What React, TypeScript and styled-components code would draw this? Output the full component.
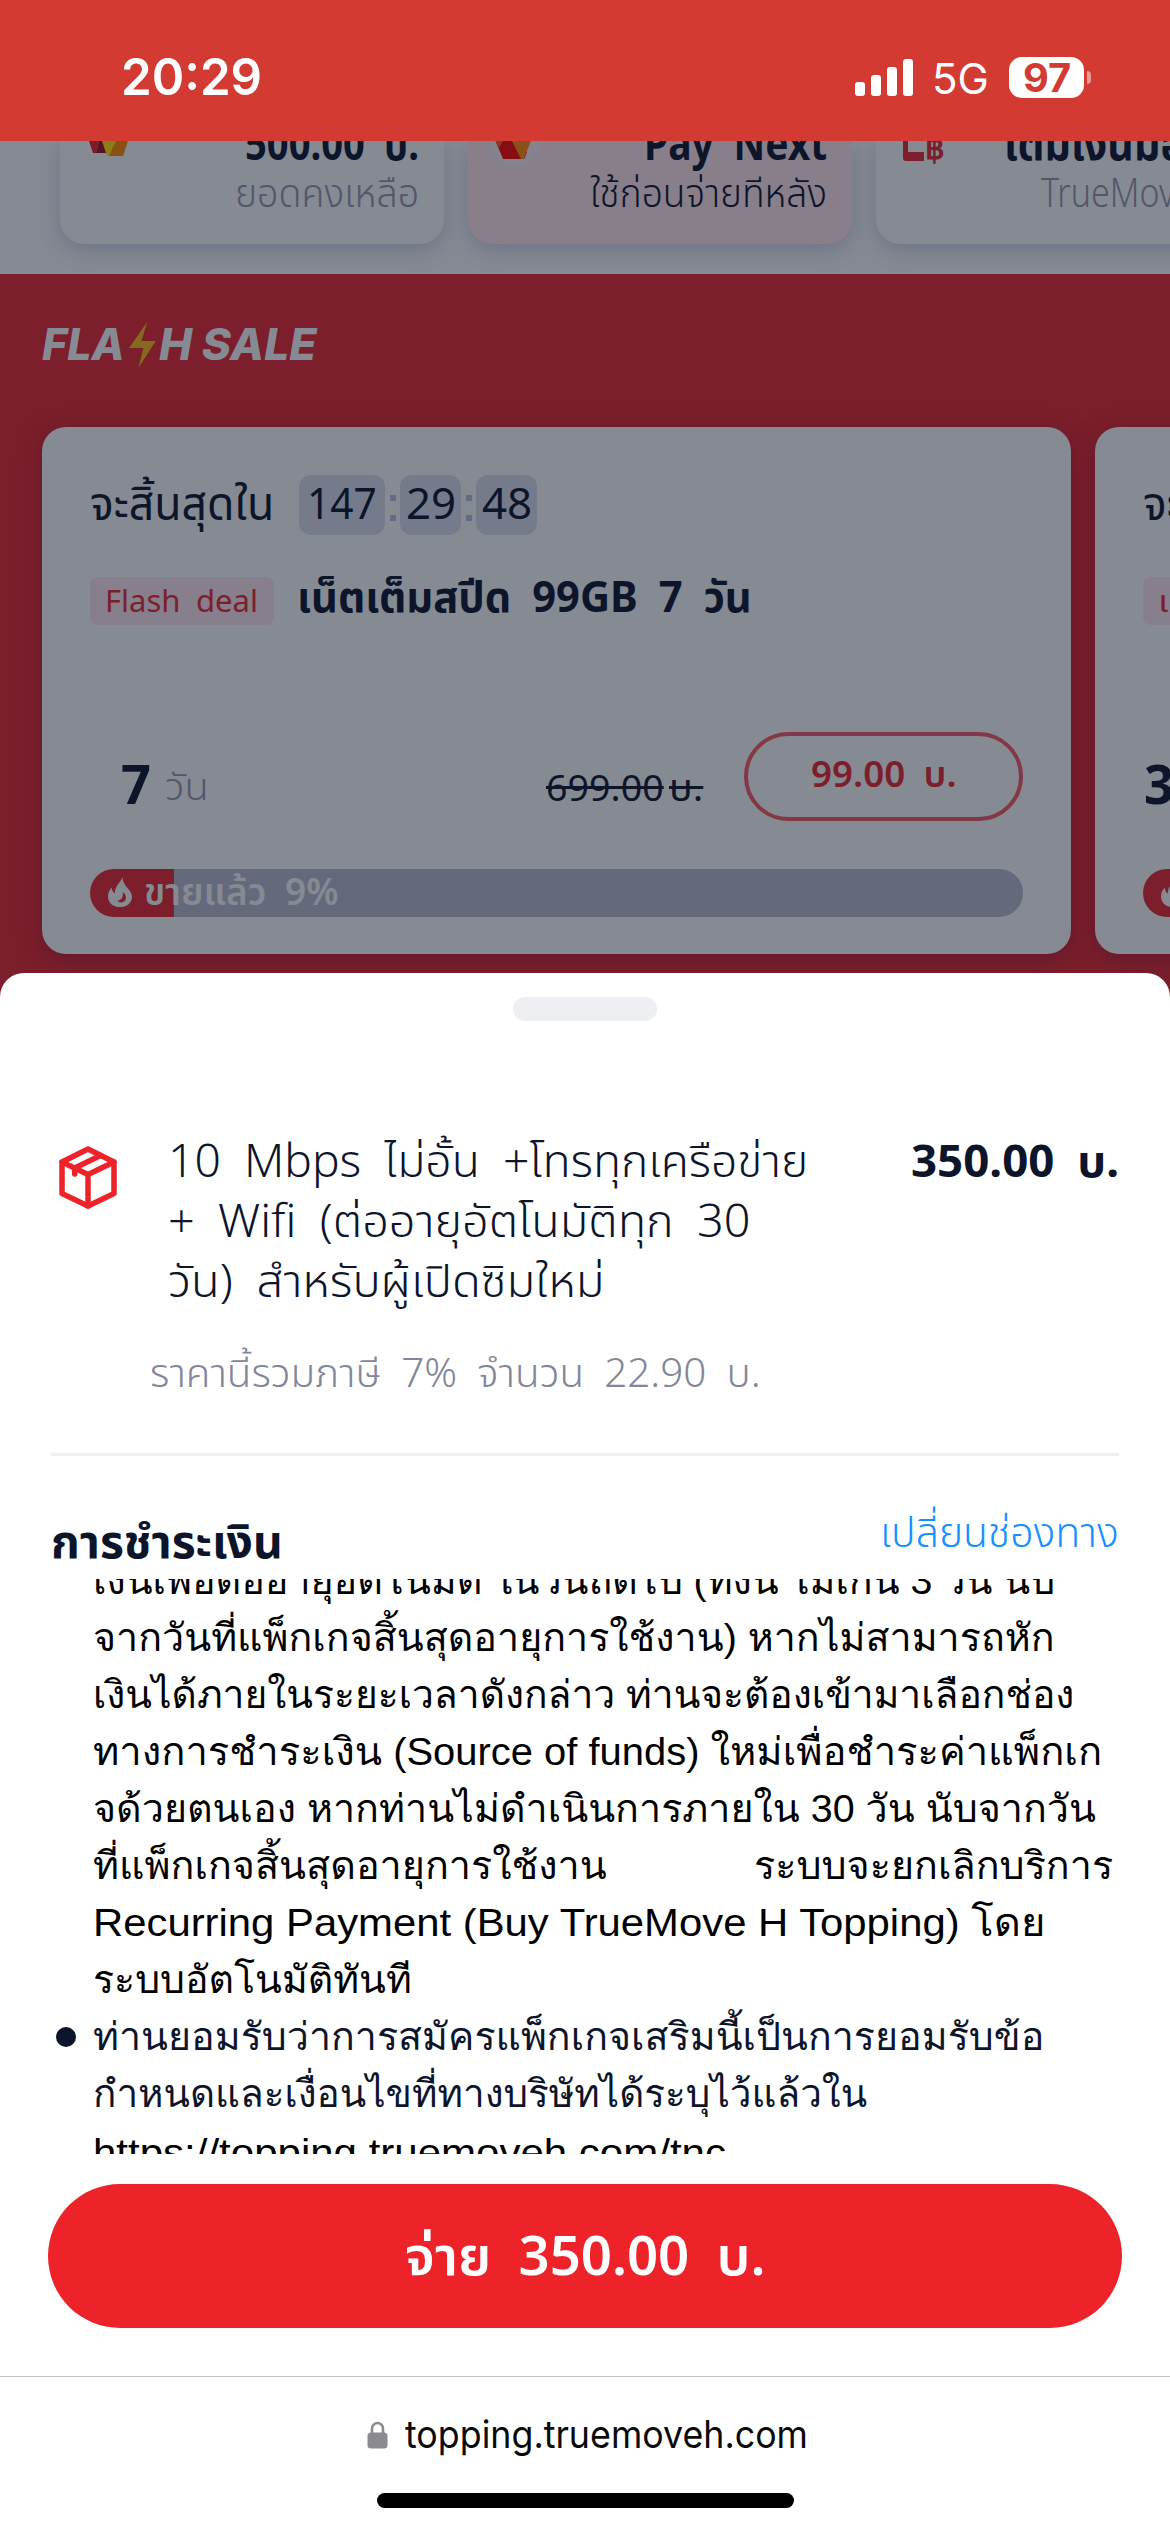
import React, { useLayoutEffect, useRef, useState } from "react";
import styled, { createGlobalStyle, css } from "styled-components";

const GlobalStyle = createGlobalStyle`
  * { box-sizing: border-box; }
  html, body { margin: 0; padding: 0; background: #fff; }
`;

const color = {
  status: "#d33a32",
  dimWhite: "#868a93",
  dimRed: "#7c1e2b",
  dimInk: "#0d152b",
  dimMuted: "#53566a",
  ink: "#0d152b",
  red: "#ee2329",
};

type Face = "brand" | "text" | "system";

const faces: Record<Face, { stack: string; shift: number; gap: string }> = {
  brand: { stack: '"Noto Sans", "Noto Sans Thai", sans-serif', shift: 0.388, gap: "0.24em" },
  text: { stack: '"Liberation Sans", Loma, "Noto Sans", sans-serif', shift: 0.3465, gap: "0" },
  system: { stack: 'Inter, "Noto Sans", sans-serif', shift: 0.364, gap: "0" },
};

/* ---------- text that keeps a set measure ---------- */

interface LineBoxProps {
  $face: Face;
  $size: number;
  $base: number;
  $height: number;
  $weight: number;
  $color: string;
  $width?: number;
  $strike?: boolean;
  $italic?: boolean;
}

const LineBox = styled.span<LineBoxProps>`
  display: block;
  flex: none;
  width: ${(p) => (p.$width ? `${p.$width}px` : "auto")};
  height: ${(p) => p.$height}px;
  line-height: ${(p) => 2 * (p.$base - faces[p.$face].shift * p.$size)}px;
  font-family: ${(p) => faces[p.$face].stack};
  font-size: ${(p) => p.$size}px;
  font-weight: ${(p) => p.$weight};
  font-style: ${(p) => (p.$italic ? "italic" : "normal")};
  word-spacing: ${(p) => faces[p.$face].gap};
  color: ${(p) => p.$color};
  white-space: nowrap;
  ${(p) =>
    p.$strike &&
    css`
      & > span {
        text-decoration: line-through;
        text-decoration-thickness: 3px;
      }
    `}
`;

const Measured = styled.span`
  display: inline-block;
  vertical-align: top;
  transform-origin: 0 50%;
`;

interface LineProps {
  children: string;
  size: number;
  base: number;
  height: number;
  width?: number;
  face?: Face;
  weight?: number;
  tint?: string;
  strike?: boolean;
  italic?: boolean;
}

function Line({
  children,
  size,
  base,
  height,
  width,
  face = "brand",
  weight = 400,
  tint = color.ink,
  strike,
  italic,
}: LineProps) {
  const ref = useRef<HTMLSpanElement>(null);
  const [scale, setScale] = useState(1);
  useLayoutEffect(() => {
    if (ref.current && width) setScale(width / ref.current.offsetWidth);
  }, [width, children]);
  return (
    <LineBox
      $face={face}
      $size={size}
      $base={base}
      $height={height}
      $weight={weight}
      $color={tint}
      $width={width}
      $strike={strike}
      $italic={italic}
    >
      <Measured ref={ref} style={{ transform: `scaleX(${scale})` }}>
        {children}
      </Measured>
    </LineBox>
  );
}

/* ---------- page ---------- */

const Screen = styled.main`
  width: 1170px;
  height: 2532px;
  overflow: hidden;
  display: flex;
  flex-direction: column;
  background: #fff;
`;

const StatusBar = styled.header`
  flex: none;
  height: 141px;
  display: flex;
  justify-content: space-between;
  padding: 0 79px 0 121px;
  background: ${color.status};
`;

const StatusRight = styled.div`
  display: flex;
  align-items: flex-start;
`;

const Signal = styled.div`
  display: flex;
  align-items: flex-end;
  gap: 6px;
  height: 37px;
  margin: 59px 19px 0 0;
`;

const SignalBar = styled.i<{ $h: number }>`
  width: 10px;
  height: ${(p) => p.$h}px;
  border-radius: 3px;
  background: #fff;
`;

const Battery = styled.div`
  display: flex;
  justify-content: center;
  width: 75px;
  height: 41px;
  margin: 57px 3px 0 20px;
  border-radius: 13px;
  background: #fff;
`;

const BatteryTip = styled.i`
  width: 4px;
  height: 13px;
  margin-top: 71px;
  border-radius: 0 5px 5px 0;
  background: #e79a96;
`;

/* ---------- wallet cards ---------- */

const Wallets = styled.section`
  flex: none;
  height: 133px;
  display: flex;
  gap: 24px;
  padding-left: 60px;
  overflow: hidden;
  background: ${color.dimWhite};
`;

const WalletCard = styled.article<{ $pink?: boolean }>`
  flex: none;
  display: flex;
  justify-content: space-between;
  width: 384px;
  height: 103px;
  padding: 0 25px 0 24px;
  border-radius: 0 0 24px 24px;
  background: ${(p) => (p.$pink ? "#887f8b" : color.dimWhite)};
  box-shadow: 0 6px 20px rgba(82, 88, 118, 0.45);
`;

const WalletText = styled.div`
  display: flex;
  flex-direction: column;
  align-items: flex-end;
  height: 103px;
`;

/* ---------- flash sale ---------- */

const FlashSection = styled.section`
  flex: none;
  height: 723px;
  overflow: hidden;
  background: ${color.dimRed};
`;

const FlashTitle = styled.h2`
  display: flex;
  height: 153px;
  margin: 0;
  padding-left: 42px;
`;

const Bolt = styled.svg`
  flex: none;
  width: 28px;
  height: 46px;
  margin: 48px 3px 0 3px;
`;

const Deals = styled.div`
  display: flex;
  gap: 24px;
  padding-left: 42px;
`;

const DealCard = styled.article`
  flex: none;
  width: 1029px;
  height: 527px;
  padding: 48px 48px 0;
  border-radius: 24px;
  background: ${color.dimWhite};
  box-shadow: 0 6px 22px rgba(90, 25, 45, 0.75);
`;

const TimerRow = styled.div`
  display: flex;
  height: 60px;
`;

const TimerGap = styled.i`
  width: 25px;
`;

const TimerBox = styled.div<{ $w: number }>`
  display: flex;
  justify-content: center;
  width: ${(p) => p.$w}px;
  height: 60px;
  border-radius: 12px;
  background: #767b8c;
`;

const Colon = styled.div`
  display: flex;
  flex-direction: column;
  align-items: center;
  gap: 14px;
  width: 15px;
  padding-top: 20px;
`;

const ColonDot = styled.i`
  width: 6px;
  height: 6px;
  background: #656b80;
`;

const NameRow = styled.div`
  display: flex;
  gap: 23px;
  height: 48px;
  margin-top: 42px;
`;

const Badge = styled.div`
  display: flex;
  flex: none;
  height: 48px;
  padding: 0 16px 0 15px;
  border-radius: 8px;
  background: #877f8c;
`;

const PriceRow = styled.div`
  display: flex;
  height: 89px;
  margin-top: 107px;
`;

const DayCount = styled.div`
  display: flex;
  flex: none;
  justify-content: flex-end;
  width: 61px;
  margin-right: 14px;
`;

const OldPrice = styled.div`
  display: flex;
  gap: 5px;
  margin: 0 41px 0 auto;
`;

const BuyButton = styled.div`
  display: flex;
  justify-content: center;
  width: 279px;
  height: 89px;
  border: 4px solid #833845;
  border-radius: 45px;
`;

const Track = styled.div`
  display: flex;
  height: 48px;
  margin-top: 48px;
  border-radius: 24px;
  overflow: hidden;
  background: linear-gradient(to right, ${color.dimRed} 84px, #64697c 84px);
`;

const Flame = styled.svg`
  flex: none;
  width: 24px;
  height: 30px;
  margin: 8px 12px 0 18px;
`;

/* ---------- payment sheet ---------- */

const Sheet = styled.section`
  flex: none;
  position: relative;
  display: flex;
  flex-direction: column;
  height: 1403px;
  margin-top: -24px;
  border-radius: 24px 24px 0 0;
  background: #fff;
`;

const Handle = styled.i`
  align-self: center;
  width: 144px;
  height: 24px;
  margin-top: 24px;
  border-radius: 12px;
  background: #eeeff3;
`;

const PackageRow = styled.div`
  display: flex;
  height: 210px;
  margin-top: 109px;
  padding: 0 51px 0 56px;
`;

const BoxIcon = styled.svg`
  flex: none;
  width: 64px;
  height: 66px;
  margin: 14px 48px 0 0;
`;

const PackageName = styled.div`
  flex: 1;
`;

const TaxRow = styled.div`
  height: 113px;
  padding-left: 150px;
`;

const Divider = styled.hr`
  flex: none;
  width: 1068px;
  height: 3px;
  margin: 0 auto;
  border: 0;
  background: #eeeff3;
`;

const PaymentHead = styled.div`
  display: flex;
  justify-content: space-between;
  height: 123px;
  padding: 44px 51px 0 51px;
`;

const Terms = styled.ul`
  flex: none;
  height: 575px;
  margin: 0;
  padding: 0 0 0 56px;
  overflow: hidden;
  list-style: none;
`;

const Term = styled.li<{ $scrolled?: boolean }>`
  display: flex;
  margin-top: ${(p) => (p.$scrolled ? "-27px" : "0")};
`;

const Bullet = styled.i<{ $hidden?: boolean }>`
  flex: none;
  width: 20px;
  height: 20px;
  margin: 19px 17px 0 0;
  border-radius: 50%;
  background: ${(p) => (p.$hidden ? "transparent" : color.ink)};
`;

const SplitLine = styled.div`
  display: flex;
  justify-content: space-between;
  width: 1020px;
`;

const LinkLine = styled.div`
  padding-top: 2px;
`;

const PayButton = styled.div`
  flex: none;
  display: flex;
  justify-content: center;
  height: 144px;
  margin: 30px 48px 0;
  border-radius: 72px;
  background: ${color.red};
`;

/* ---------- browser bar ---------- */

const BrowserBar = styled.footer`
  flex: none;
  display: flex;
  flex-direction: column;
  align-items: center;
  height: 156px;
  border-top: 1px solid #c3c3c5;
`;

const Address = styled.div`
  display: flex;
  height: 116px;
  margin-left: 4px;
`;

const Lock = styled.svg`
  width: 21px;
  height: 28px;
  margin: 44px 17px 0 0;
`;

const HomeIndicator = styled.i`
  width: 417px;
  height: 15px;
  border-radius: 8px;
  background: #000;
`;

interface DealData {
  clock: [string, number, number][];
  tag: [string, number];
  name: [string, number];
  days: [string, number];
  old: [string, number];
  price: [string, number];
  sold: [string, number];
}

const deals: DealData[] = [
  {
    clock: [["147", 86, 70], ["29", 61, 50], ["48", 61, 50]],
    tag: ["Flash deal", 153],
    name: ["เน็ตเต็มสปีด 99GB 7 วัน", 455],
    days: ["7", 30],
    old: ["699.00", 118],
    price: ["99.00 บ.", 146],
    sold: ["ขายแล้ว 9%", 195],
  },
  {
    clock: [["147", 86, 70], ["29", 61, 50], ["48", 61, 50]],
    tag: ["เติมเน็ต", 110],
    name: ["เน็ตเต็มสปีด 30 วัน", 400],
    days: ["30", 60],
    old: ["699.00", 118],
    price: ["99.00 บ.", 146],
    sold: ["ขายแล้ว 9%", 195],
  },
];

function Deal({ deal }: { deal: DealData }) {
  return (
    <DealCard>
      <TimerRow>
        <Line size={46} base={45} height={60} width={184} tint={color.dimInk}>จะสิ้นสุดใน</Line>
        <TimerGap />
        {deal.clock.map(([value, box, w], i) => (
          <React.Fragment key={i}>
            {i > 0 && (
              <Colon>
                <ColonDot />
                <ColonDot />
              </Colon>
            )}
            <TimerBox $w={box}>
              <Line size={43} base={45} height={60} width={w} tint={color.dimInk}>{value}</Line>
            </TimerBox>
          </React.Fragment>
        ))}
      </TimerRow>
      <NameRow>
        <Badge>
          <Line size={30} base={36} height={48} width={deal.tag[1]} tint={color.dimRed}>{deal.tag[0]}</Line>
        </Badge>
        <Line size={43} base={36} height={48} width={deal.name[1]} weight={700} tint={color.dimInk}>{deal.name[0]}</Line>
      </NameRow>
      <PriceRow>
        <DayCount>
          <Line size={54} base={72} height={89} width={deal.days[1]} weight={700} tint={color.dimInk}>{deal.days[0]}</Line>
        </DayCount>
        <Line size={38} base={68} height={89} width={44} weight={300} tint={color.dimMuted}>วัน</Line>
        <OldPrice>
          <Line size={37} base={69} height={89} width={deal.old[1]} strike tint={color.dimInk}>{deal.old[0]}</Line>
          <Line size={37} base={69} height={89} width={34} strike tint={color.dimInk}>บ.</Line>
        </OldPrice>
        <BuyButton>
          <Line size={36} base={52} height={80} width={deal.price[1]} weight={600} tint={color.dimRed}>{deal.price[0]}</Line>
        </BuyButton>
      </PriceRow>
      <Track>
        <Flame viewBox="0 0 24 30">
          <path
            fill={color.dimWhite}
            fillRule="evenodd"
            d="M14.6 0C13.4 4.6 6.6 8.6 6.9 16.6C5.2 15.6 4 13.6 3.6 10.6C1.2 13.4 0 16.4 0 19.4C0 25.6 5 30 12 30C19 30 24 25.6 24 19.4C24 12.8 14.4 9.4 14.6 0ZM14.8 15C17.6 17.4 18.6 20 17.6 22.6C16.4 25.8 11.6 26.6 9.4 23.6C13.2 23.4 15.6 20.2 14.8 15Z"
          />
        </Flame>
        <Line size={37} base={36} height={48} width={deal.sold[1]} weight={600} tint={color.dimWhite}>{deal.sold[0]}</Line>
      </Track>
    </DealCard>
  );
}

const firstTerm: [string, number][] = [
  ["เงินเพื่อต่ออายุอัตโนมัติ ในวันถัดไป (ทั้งนี้ ไม่เกิน 3 วัน นับ", 962],
  ["จากวันที่แพ็กเกจสิ้นสุดอายุการใช้งาน) หากไม่สามารถหัก", 962],
  ["เงินได้ภายในระยะเวลาดังกล่าว ท่านจะต้องเข้ามาเลือกช่อง", 981],
  ["ทางการชำระเงิน (Source of funds) ใหม่เพื่อชำระค่าแพ็กเก", 1009],
  ["จด้วยตนเอง หากท่านไม่ดำเนินการภายใน 30 วัน นับจากวัน", 1003],
];

export default function App() {
  const term = (text: string, width: number, tint = "#000") => (
    <Line key={text} face="text" size={38.5} base={42} height={57} width={width} tint={tint}>
      {text}
    </Line>
  );
  return (
    <>
      <GlobalStyle />
      <Screen>
        <StatusBar>
          <Line face="system" size={51} base={96} height={141} width={141} weight={600} tint="#fff">20:29</Line>
          <StatusRight>
            <Signal>
              {[14, 21, 29, 37].map((h) => (
                <SignalBar key={h} $h={h} />
              ))}
            </Signal>
            <Line face="system" size={42} base={94} height={141} width={57} weight={400} tint="#fff">5G</Line>
            <Battery>
              <Line face="system" size={39} base={35} height={41} width={48} weight={700} tint={color.status}>97</Line>
            </Battery>
            <BatteryTip />
          </StatusRight>
        </StatusBar>

        <Wallets>
          <WalletCard>
            <svg width="56" height="26" viewBox="84 141 56 26">
              <path fill="#7f1a27" d="M89 141h10l-3 12h-3z" />
              <path fill="#571220" d="M99 141h4l4 12H96z" />
              <path fill="#8b7d18" d="M102 141h15l-8 15h-2z" />
              <path fill="#8a5014" d="M116 141h12l-5 15h-14z" />
            </svg>
            <WalletText>
              <Line size={45} base={19} height={22} width={174} weight={700} tint={color.dimInk}>500.00 บ.</Line>
              <Line size={40} base={45} height={80} width={184} weight={300} tint={color.dimMuted}>ยอดคงเหลือ</Line>
            </WalletText>
          </WalletCard>
          <WalletCard $pink>
            <svg width="52" height="28" viewBox="492 141 52 28">
              <circle cx="516" cy="142" r="23.5" fill="#88828d" stroke="#7c8596" strokeWidth="1.2" />
              <path fill="#850e15" d="M495.500 141H512L527 152L524 159H503Z" />
              <path fill="#8a5219" d="M512 141h19l-7.500 18H521z" />
              <path fill="#85401a" d="M495.500 141H503L499 148Z" />
            </svg>
            <WalletText>
              <Line size={45} base={19} height={22} width={183} weight={700} tint={color.dimInk}>Pay Next</Line>
              <Line size={40} base={45} height={80} width={237} weight={300} tint={color.dimInk}>ใช้ก่อนจ่ายทีหลัง</Line>
            </WalletText>
          </WalletCard>
          <WalletCard>
            <svg width="52" height="26" viewBox="900 141 52 26">
              <path fill={color.dimRed} d="M903 141h5v11h16v9h-18q-3 0-3-3z" />
              <text x="925" y="159" fontFamily="Noto Sans" fontWeight="700" fontSize="31" fill={color.dimRed}>฿</text>
            </svg>
            <WalletText>
              <Line size={45} base={19} height={22} width={231} weight={700} tint={color.dimInk}>เติมเงินมือถือ</Line>
              <Line size={40} base={45} height={80} width={194} weight={300} tint={color.dimMuted}>TrueMove H</Line>
            </WalletText>
          </WalletCard>
        </Wallets>

        <FlashSection>
          <FlashTitle>
            <Line face="system" size={44} base={87} height={100} width={83} weight={800} italic tint={color.dimWhite}>FLA</Line>
            <Bolt viewBox="127 322 28 46">
              <path fill="#86691f" d="M146.200 322L128 348h14.300L137.300 368L154.800 341H140.500z" />
            </Bolt>
            <Line face="system" size={44} base={87} height={100} width={158} weight={800} italic tint={color.dimWhite}>H SALE</Line>
          </FlashTitle>
          <Deals>
            {deals.map((deal) => (
              <Deal key={deal.tag[0]} deal={deal} />
            ))}
          </Deals>
        </FlashSection>

        <Sheet>
          <Handle />
          <PackageRow>
            <BoxIcon viewBox="56 1144 64 66">
              <g fill="none" stroke={color.red} strokeWidth="5.5" strokeLinejoin="round" strokeLinecap="round">
                <path d="M88 1149L114 1162V1193.500L88 1206L62 1193.500V1162Z" />
                <path d="M62 1162L88 1174.500L114 1162M88 1174.500V1206" />
                <path d="M100.500 1155.500L74.700 1168V1174" />
              </g>
            </BoxIcon>
            <PackageName>
              <Line size={45} base={47} height={60} width={640} weight={300}>10 Mbps ไม่อั้น +โทรทุกเครือข่าย</Line>
              <Line size={45} base={47} height={60} width={582} weight={300}>+ Wifi (ต่ออายุอัตโนมัติทุก 30</Line>
              <Line size={45} base={47} height={60} width={437} weight={300}>วัน) สำหรับผู้เปิดซิมใหม่</Line>
            </PackageName>
            <Line size={45} base={47} height={60} width={208} weight={700}>350.00 บ.</Line>
          </PackageRow>
          <TaxRow>
            <Line size={40} base={48} height={60} width={611} weight={300} tint="#83869a">ราคานี้รวมภาษี 7% จำนวน 22.90 บ.</Line>
          </TaxRow>
          <Divider />
          <PaymentHead>
            <Line size={46} base={58} height={79} width={232} weight={700}>การชำระเงิน</Line>
            <Line size={41} base={47} height={79} width={239} weight={300} tint="#1890ff">เปลี่ยนช่องทาง</Line>
          </PaymentHead>
          <Terms>
            <Term $scrolled>
              <Bullet $hidden />
              <div>
                {firstTerm.map(([text, width]) => term(text, width))}
                <SplitLine>
                  {term("ที่แพ็กเกจสิ้นสุดอายุการใช้งาน", 514)}
                  {term("ระบบจะยกเลิกบริการ", 359)}
                </SplitLine>
                {term("Recurring Payment (Buy TrueMove H Topping) โดย", 952)}
                {term("ระบบอัตโนมัติทันที", 319)}
              </div>
            </Term>
            <Term>
              <Bullet />
              <div>
                {term("ท่านยอมรับว่าการสมัครแพ็กเกจเสริมนี้เป็นการยอมรับข้อ", 951, color.ink)}
                {term("กำหนดและเงื่อนไขที่ทางบริษัทได้ระบุไว้แล้วใน", 774, color.ink)}
                <LinkLine>{term("https://topping.truemoveh.com/tnc", 633)}</LinkLine>
              </div>
            </Term>
          </Terms>
          <PayButton>
            <Line size={54} base={91} height={144} width={360} weight={600} tint="#fff">จ่าย 350.00 บ.</Line>
          </PayButton>
        </Sheet>

        <BrowserBar>
          <Address>
            <Lock viewBox="0 0 21 28">
              <path d="M5 13V7.500a5.500 5.500 0 0 1 11 0V13" fill="none" stroke="#8a8a90" strokeWidth="2.600" />
              <rect x="0.500" y="11.500" width="20" height="16" rx="3.500" fill="#8a8a90" />
            </Lock>
            <Line face="system" size={38} base={71} height={100} width={403} tint="#0a0a0a">topping.truemoveh.com</Line>
          </Address>
          <HomeIndicator />
        </BrowserBar>
      </Screen>
    </>
  );
}
